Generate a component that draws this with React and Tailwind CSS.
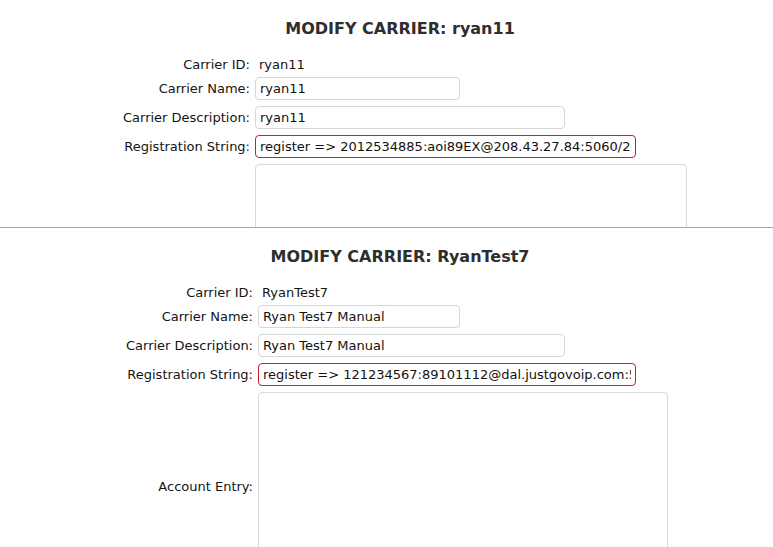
const panels = [
  {
    id: 'ryan11',
    name: 'ryan11',
    description: 'ryan11',
    registration: 'register => 2012534885:aoi89EX@208.43.27.84:5060/2012534885',
    labelWidth: 'w-[250px]',
    nameWidth: 'w-[205px]',
    descWidth: 'w-[310px]',
    regWidth: 'w-[381px]',
    areaWidth: 'w-[432px]',
    height: 'h-[227px]',
    // textarea runs past the crop, so its label is out of view
    showAccountLabel: false,
  },
  {
    id: 'RyanTest7',
    name: 'Ryan Test7 Manual',
    description: 'Ryan Test7 Manual',
    registration: 'register => 121234567:89101112@dal.justgovoip.com:5060/121234567',
    labelWidth: 'w-[253px]',
    nameWidth: 'w-[202px]',
    descWidth: 'w-[307px]',
    regWidth: 'w-[378px]',
    areaWidth: 'w-[410px]',
    height: 'h-[319px]',
    showAccountLabel: true,
  },
];

function Row({ label, labelWidth, children, className = '' }) {
  return (
    <div className={`flex items-center gap-[5px] ${className}`}>
      <div className={`${labelWidth} shrink-0 text-right`}>{label}</div>
      {children}
    </div>
  );
}

function TextInput({ value, width, invalid }) {
  return (
    <input
      readOnly
      value={value}
      className={`${width} h-[23px] rounded-[4px] border bg-white px-[4px] text-[13px] text-[#111] outline-none ${
        invalid ? 'border-[#cc1f26]' : 'border-[#d6d6d6]'
      }`}
    />
  );
}

function CarrierPanel({ p }) {
  return (
    <section className={`${p.height} overflow-hidden bg-white pt-[19px]`}>
      {/* Heading sits a little right of the page centre, as in the app */}
      <h2 className="pl-[27px] text-center text-[16px] leading-[20px] font-bold text-[#2e2e2e]">
        MODIFY CARRIER: {p.id}
      </h2>

      <div className="mt-[18px] flex flex-col text-[13px] text-[#141414]">
        <Row label="Carrier ID:" labelWidth={p.labelWidth} className="h-[16px]">
          <span className="pl-[4px]">{p.id}</span>
        </Row>
        <Row label="Carrier Name:" labelWidth={p.labelWidth} className="mt-[4px]">
          <TextInput value={p.name} width={p.nameWidth} />
        </Row>
        <Row label="Carrier Description:" labelWidth={p.labelWidth} className="mt-[6px]">
          <TextInput value={p.description} width={p.descWidth} />
        </Row>
        <Row label="Registration String:" labelWidth={p.labelWidth} className="mt-[6px]">
          <TextInput value={p.registration} width={p.regWidth} invalid />
        </Row>
        <Row
          label={p.showAccountLabel ? 'Account Entry:' : ''}
          labelWidth={p.labelWidth}
          className="mt-[6px]"
        >
          <textarea
            readOnly
            className={`${p.areaWidth} h-[190px] shrink-0 resize-none rounded-[4px] border border-[#d9d9d9] bg-white outline-none`}
          />
        </Row>
      </div>
    </section>
  );
}

export default function App() {
  return (
    <div className="h-[547px] w-[773px] overflow-hidden bg-white font-['DejaVu_Sans',sans-serif]">
      <CarrierPanel p={panels[0]} />
      <div className="h-px bg-[#a3abab]" />
      <CarrierPanel p={panels[1]} />
    </div>
  );
}
